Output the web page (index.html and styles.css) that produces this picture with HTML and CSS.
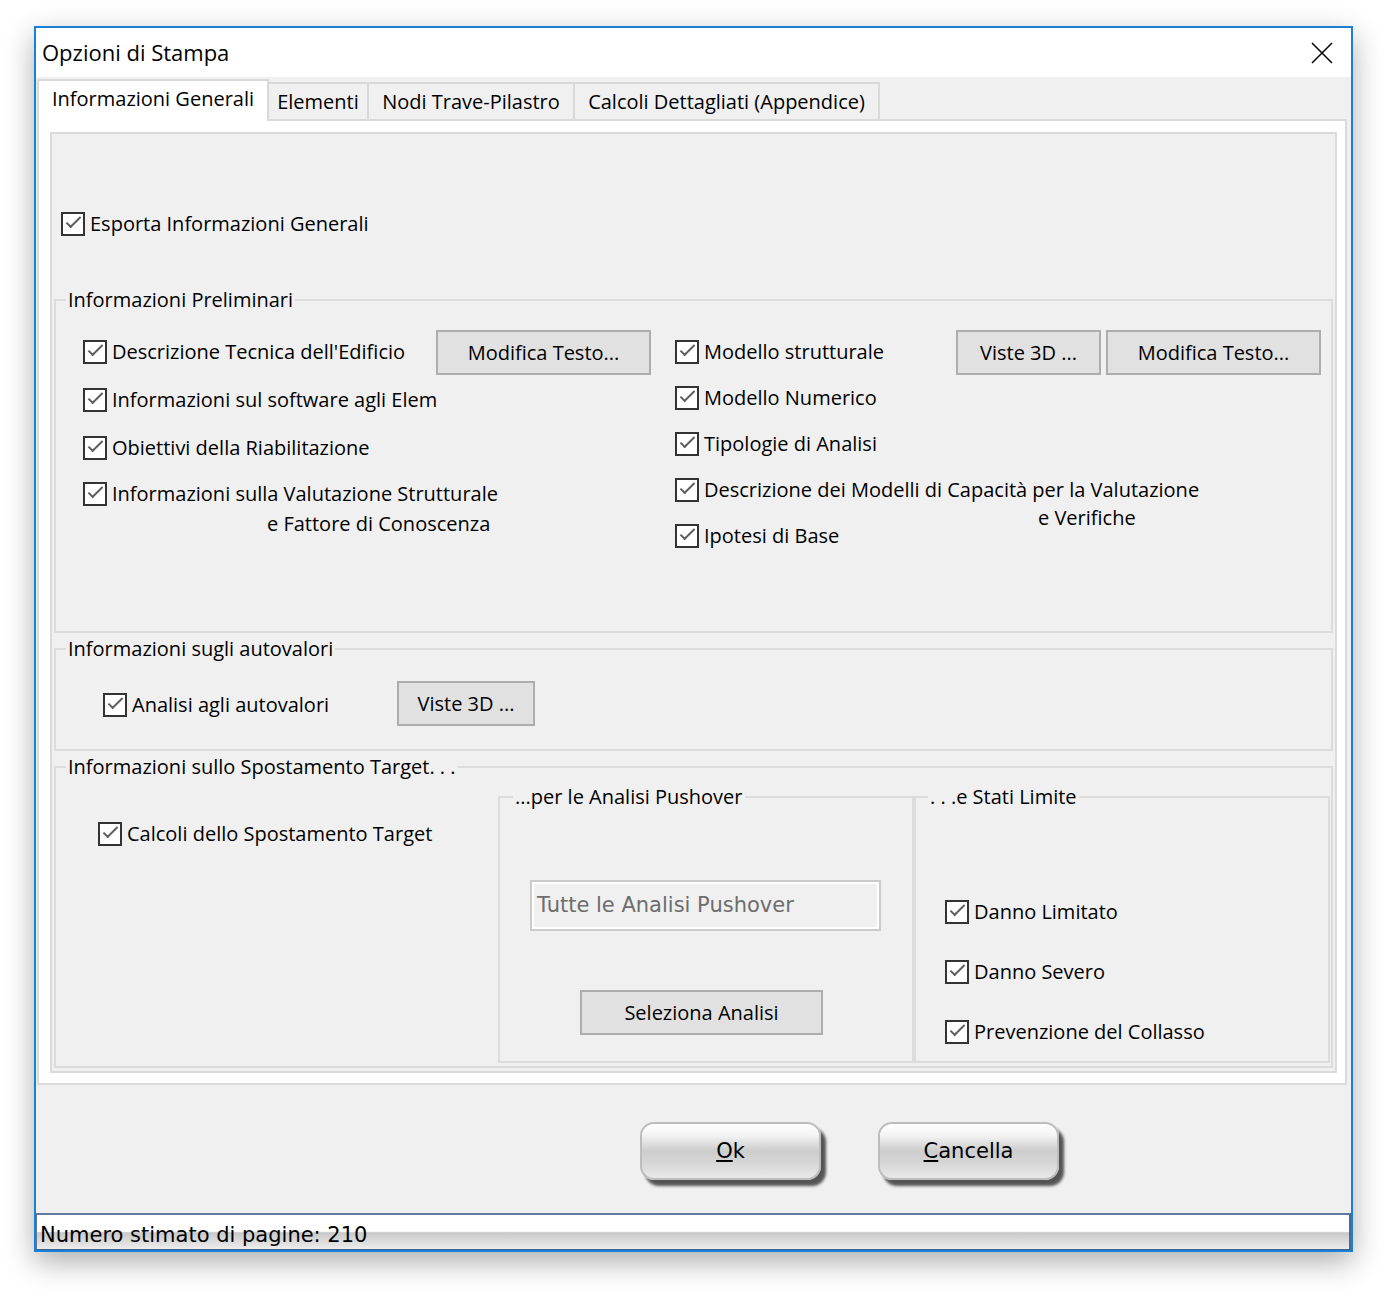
FILE: index.html
```html
<!DOCTYPE html>
<html lang="it">
<head>
<meta charset="utf-8">
<title>Opzioni di Stampa</title>
<link rel="stylesheet" href="styles.css">
</head>
<body>
<div class="window">
  <div class="titlebar">
    <span class="title">Opzioni di Stampa</span>
    <svg class="close" width="22" height="22" viewBox="0 0 22 22"><path d="M1 1L21 21M21 1L1 21" stroke="#000" stroke-width="1.5" fill="none"/></svg>
  </div>
  <div class="client">
    <div class="tabs">
      <div class="tab active t1">Informazioni Generali</div>
      <div class="tab t2">Elementi</div>
      <div class="tab t3">Nodi Trave-Pilastro</div>
      <div class="tab t4">Calcoli Dettagliati (Appendice)</div>
    </div>
    <div class="pane">
      <div class="panel">
        <div class="chk esporta"><span class="box"></span>Esporta Informazioni Generali</div>

        <fieldset class="group g-prelim">
          <legend>Informazioni Preliminari</legend>
          <div class="cols">
            <div class="col">
              <div class="row row-l1">
                <div class="chk"><span class="box"></span>Descrizione Tecnica dell'Edificio</div>
                <div class="btn w-mod">Modifica Testo...</div>
              </div>
              <div class="row h49"><div class="chk"><span class="box"></span>Informazioni sul software agli Elem</div></div>
              <div class="row h47"><div class="chk"><span class="box"></span>Obiettivi della Riabilitazione</div></div>
              <div class="row"><div class="chk"><span class="box"></span>Informazioni sulla Valutazione Strutturale</div></div>
              <div class="cont-l">e Fattore di Conoscenza</div>
            </div>
            <div class="col">
              <div class="row">
                <div class="chk"><span class="box"></span>Modello strutturale</div>
                <div class="btn-group">
                  <div class="btn w-viste">Viste 3D ...</div>
                  <div class="btn w-mod">Modifica Testo...</div>
                </div>
              </div>
              <div class="row"><div class="chk"><span class="box"></span>Modello Numerico</div></div>
              <div class="row"><div class="chk"><span class="box"></span>Tipologie di Analisi</div></div>
              <div class="row"><div class="chk"><span class="box"></span>Descrizione dei Modelli di Capacità per la Valutazione</div></div>
              <div class="cont-r">e Verifiche</div>
              <div class="row"><div class="chk"><span class="box"></span>Ipotesi di Base</div></div>
            </div>
          </div>
        </fieldset>

        <fieldset class="group g-auto">
          <legend>Informazioni sugli autovalori</legend>
          <div class="auto-inner">
            <div class="chk auto-label"><span class="box"></span>Analisi agli autovalori</div>
            <div class="btn w-viste2">Viste 3D ...</div>
          </div>
        </fieldset>

        <fieldset class="group g-target">
          <legend>Informazioni sullo Spostamento Target. . .</legend>
          <div class="target-inner">
            <div class="target-left">
              <div class="chk"><span class="box"></span>Calcoli dello Spostamento Target</div>
            </div>
            <fieldset class="group sub sub1">
              <legend>...per le Analisi Pushover</legend>
              <div class="push-inner">
                <div class="field">Tutte le Analisi Pushover</div>
                <div class="btn w-sel">Seleziona Analisi</div>
              </div>
            </fieldset>
            <fieldset class="group sub sub2">
              <legend>. . .e Stati Limite</legend>
              <div class="stati-inner">
                <div class="chk"><span class="box"></span>Danno Limitato</div>
                <div class="chk"><span class="box"></span>Danno Severo</div>
                <div class="chk"><span class="box"></span>Prevenzione del Collasso</div>
              </div>
            </fieldset>
          </div>
        </fieldset>
      </div>
    </div>
    <div class="actions">
      <div class="glossy"><span><u>O</u>k</span></div>
      <div class="glossy"><span><u>C</u>ancella</span></div>
    </div>
  </div>
  <div class="status">Numero stimato di pagine: 210</div>
</div>
</body>
</html>
```

FILE: styles.css
```css
* { box-sizing: border-box; }
html, body { margin: 0; padding: 0; background: #fff; }
body {
  font-family: "Open Sans", "Noto Sans", sans-serif;
  font-size: 20px;
  color: #000;
  min-height: 1296px;
  padding-top: 26px;
}

.window {
  margin: 0 0 0 34px;
  width: 1319px;
  height: 1226px;
  border: 2px solid #1a80d6;
  box-shadow: 0 10px 28px rgba(0, 0, 0, 0.32);
  display: flex;
  flex-direction: column;
  background: #f0f0f0;
}

.titlebar {
  height: 49px;
  flex: none;
  background: #fff;
  display: flex;
  align-items: center;
  justify-content: space-between;
  padding: 0 18px 2px 6px;
}
.title { font-size: 22px; line-height: 30px; }
.close { display: block; margin-top: 2px; }

.client {
  height: 1136px;
  flex: none;
  display: flex;
  flex-direction: column;
}

.tabs {
  height: 42px;
  flex: none;
  display: flex;
  align-items: flex-end;
  padding-left: 1px;
  position: relative;
  z-index: 2;
}
.tab {
  height: 37px;
  border: 2px solid #d9d9d9;
  border-bottom: 0;
  background: #f0f0f0;
  margin-left: -2px;
  display: flex;
  align-items: center;
  justify-content: center;
  white-space: nowrap;
  line-height: 26px;
}
.tab.active {
  height: 42px;
  margin-left: 0;
  margin-bottom: -2px;
  background: #fff;
  padding-bottom: 4px;
  position: relative;
  z-index: 1;
}
.t1 { width: 232px; }
.t2 { width: 102px; }
.t3 { width: 208px; }
.t4 { width: 307px; }

.pane {
  margin-left: 1px;
  width: 1310px;
  height: 966px;
  flex: none;
  background: #fff;
  border: 2px solid #dadada;
  padding: 11px 8px 10px 11px;
}
.panel {
  height: 100%;
  background: #f0f0f0;
  border: 2px solid #dadada;
  padding: 0 2px 3px 2px;
  display: flex;
  flex-direction: column;
}

/* checkboxes */
.chk {
  display: flex;
  align-items: center;
  white-space: nowrap;
  line-height: 26px;
}
.box {
  width: 24px;
  height: 24px;
  flex: none;
  border: 2px solid #333;
  background: #fff;
  margin-right: 5px;
  position: relative;
}
.box::after {
  content: "";
  position: absolute;
  left: 3px;
  top: 3px;
  width: 13px;
  height: 5px;
  border-left: 2px solid #5e5e5e;
  border-bottom: 2px solid #5e5e5e;
  transform: rotate(-45deg);
}

.esporta { margin: 78px 0 0 7px; height: 24px; }

/* group boxes */
.group {
  margin: 0;
  padding: 0;
  border: 2px solid #dcdcdc;
  min-width: 0;
}
.group > legend {
  margin-left: 10px;
  padding: 0 2px;
  line-height: 26px;
  font-size: 20px;
  white-space: nowrap;
}

.g-prelim { margin-top: 51px; }
.cols {
  display: grid;
  grid-template-columns: 592px 1fr;
  padding: 16px 10px 72px 27px;
}
.col { display: flex; flex-direction: column; }
.row { display: flex; align-items: center; height: 46px; }
.row.h49 { height: 49px; }
.row.h47 { height: 47px; }
.row-l1 { justify-content: space-between; padding-right: 24px; }
.cont-l { line-height: 26px; margin-top: -6px; padding-left: 184px; white-space: nowrap; }
.cont-r { height: 0; line-height: 26px; margin: -8px 0 8px; padding-left: 363px; white-space: nowrap; }

.btn {
  height: 45px;
  flex: none;
  background: #e1e1e1;
  border: 2px solid #adadad;
  display: flex;
  align-items: center;
  justify-content: center;
  white-space: nowrap;
}
.btn-group { display: flex; gap: 5px; margin-left: auto; }
.w-mod { width: 215px; }
.w-viste { width: 145px; }
.w-viste2 { width: 138px; }
.w-sel { width: 243px; margin: 59px 0 0 50px; }

.g-auto { margin-top: 3px; }
.auto-inner {
  display: flex;
  align-items: center;
  height: 87px;
  padding: 19px 0 23px 47px;
}
.auto-label { width: 294px; padding-top: 2px; }

.g-target { margin-top: 3px; }
.target-inner {
  display: flex;
  height: 286px;
  padding-top: 4px;
}
.target-left { width: 442px; flex: none; padding: 37px 0 0 42px; }
.sub { width: 416px; height: 279px; flex: none; }
.sub1 > legend { margin-left: 13px; }
.sub2 > legend { margin-left: 12px; }

.push-inner {
  display: flex;
  flex-direction: column;
  align-items: flex-start;
  padding: 70px 0 0 30px;
}
.field {
  width: 351px;
  height: 51px;
  border: 2px solid #cbcbcb;
  box-shadow: inset 0 0 0 2px #fff;
  background: #f0f0f0;
  color: #6d6d6d;
  font-family: "DejaVu Sans", "Liberation Sans", sans-serif;
  font-size: 21px;
  padding: 0 0 2px 5px;
  display: flex;
  align-items: center;
  white-space: nowrap;
}

.stati-inner {
  display: flex;
  flex-direction: column;
  gap: 34px;
  padding: 89px 0 0 29px;
}

/* bottom buttons */
.actions {
  height: 128px;
  flex: none;
  display: flex;
  gap: 57px;
  padding: 37px 0 0 604px;
}
.glossy {
  width: 181px;
  height: 58px;
  border-radius: 14px;
  border: 2px solid #bdbdbd;
  background: linear-gradient(to bottom, #ffffff 0%, #f3f3f3 22%, #dcdcdc 38%, #cdcdcd 50%, #d6d6d6 72%, #e9e9e9 100%);
  box-shadow: 5px 6px 3px rgba(0, 0, 0, 0.65), inset 0 2px 0 #ffffff;
  display: flex;
  align-items: center;
  justify-content: center;
  font-family: "DejaVu Sans", "Liberation Sans", sans-serif;
  font-size: 21px;
}

/* status bar */
.status {
  height: 37px;
  flex: none;
  border-top: 2px solid #60799b;
  border-left: 1px solid #5a7595;
  border-right: 2px solid #46699a;
  border-bottom: 1px solid #3d5f8a;
  background: linear-gradient(to bottom, #ffffff 0%, #ffffff 48%, #c9c9c9 52%, #e6e6e6 92%, #eeeeee 100%);
  font-family: "DejaVu Sans", "Liberation Sans", sans-serif;
  font-size: 21px;
  line-height: 34px;
  padding: 3px 0 0 3px;
  white-space: nowrap;
}
```
